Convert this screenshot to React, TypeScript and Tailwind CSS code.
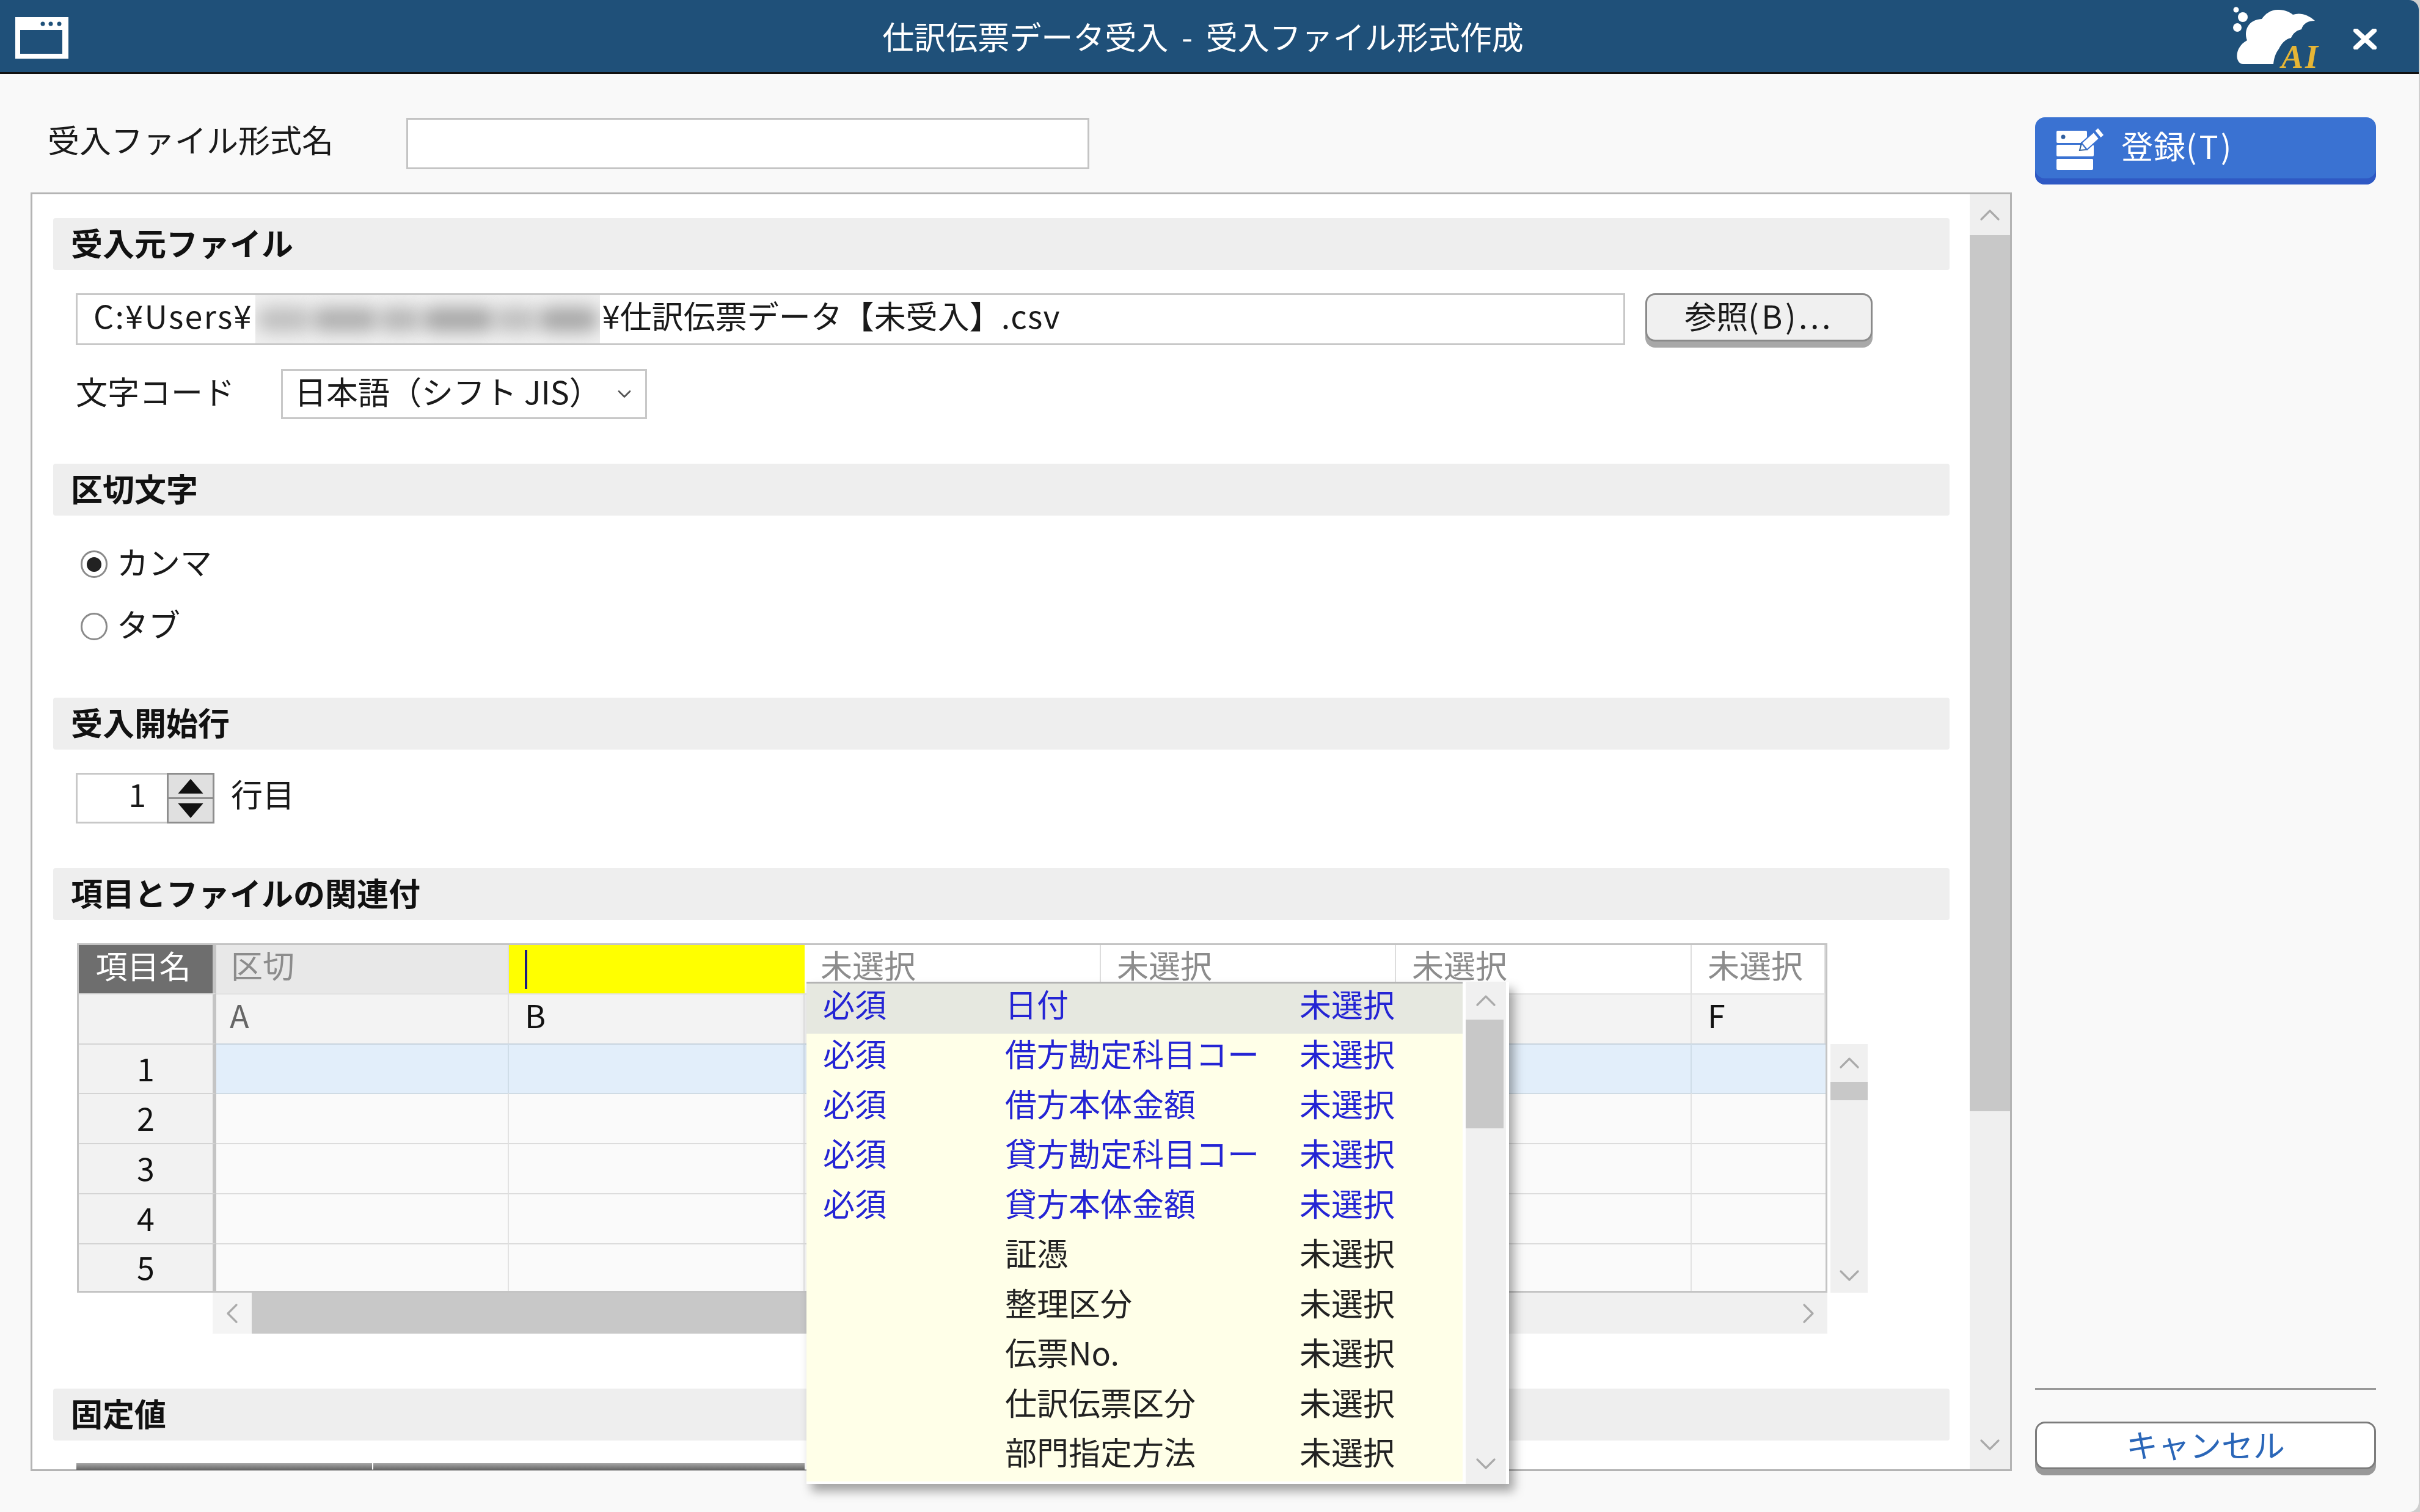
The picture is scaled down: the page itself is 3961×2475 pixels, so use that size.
import { ChevronDown, ChevronLeft, ChevronRight, ChevronUp } from 'lucide-react';

const rowNumbers = [1, 2, 3, 4, 5];
const columnKeys = ['A', 'B', 'C', 'D', 'E', 'F'];

const dropdownItems = [
  { required: true, name: '日付' },
  { required: true, name: '借方勘定科目コー' },
  { required: true, name: '借方本体金額' },
  { required: true, name: '貸方勘定科目コー' },
  { required: true, name: '貸方本体金額' },
  { required: false, name: '証憑' },
  { required: false, name: '整理区分' },
  { required: false, name: '伝票No.' },
  { required: false, name: '仕訳伝票区分' },
  { required: false, name: '部門指定方法' },
];

const blurBlobs = ['w-[90px] opacity-60', 'w-[110px] opacity-80', 'w-[70px] opacity-70', 'w-[120px] opacity-90', 'w-[70px] opacity-60', 'w-[100px] opacity-90'];

function SectionHeader({ title }: { title: string }) {
  return (
    <div className="flex h-[85px] w-[3104px] items-center rounded-[4px] bg-[#eeeeee] pb-[5px] pl-[29px] text-[52px] font-bold leading-none text-[#111]">
      {title}
    </div>
  );
}

function WindowIcon() {
  return (
    <svg width="87" height="68" viewBox="0 0 87 68">
      <rect x="0" y="0" width="87" height="68" fill="#fff" />
      <rect x="8" y="21" width="69" height="39" fill="#1f5079" />
      <circle cx="45" cy="11" r="3.5" fill="#1f5079" />
      <circle cx="58" cy="11" r="3.5" fill="#1f5079" />
      <circle cx="72" cy="11" r="3.5" fill="#1f5079" />
    </svg>
  );
}

function CloudLogo() {
  return (
    <div className="relative h-[118px] w-[160px]">
      <svg width="160" height="118" viewBox="0 0 160 118">
        <circle cx="20" cy="16" r="4.5" fill="#fff" />
        <circle cx="31" cy="28" r="8" fill="#fff" />
        <circle cx="22" cy="45" r="7" fill="#fff" />
        <path
          d="M32 105C18 105 16 78 38 66C32 50 40 32 62 31C68 22 78 15 90 16C100 16 108 20 113 24C125 20 138 24 149 34C138 34 130 38 127 48C118 50 113 55 110 62C100 64 94 72 90 80C84 88 82 96 81 105Z"
          fill="#fff"
        />
      </svg>
      <span className="absolute left-[94px] top-[66px] font-['Liberation_Serif',serif] text-[54px] font-bold italic leading-none tracking-[3px] text-[#e6b535]">
        AI
      </span>
    </div>
  );
}

function RegisterIcon() {
  return (
    <svg width="110" height="95" viewBox="0 0 110 95" className="-mt-[8px] shrink-0">
      <rect x="16" y="18" width="50" height="20" rx="2" fill="#fff" />
      <circle cx="27" cy="28" r="3.5" fill="#2f5f9f" />
      <rect x="16" y="41" width="61" height="19" rx="2" fill="#fff" />
      <rect x="16" y="64" width="60" height="18" rx="2" fill="#fff" />
      <polygon points="54,50 57,38 66,49" fill="#fff" stroke="#2a5a94" strokeWidth="2" />
      <polygon points="57,38 77,20 86,31 66,49" fill="#fff" stroke="#3a72d2" strokeWidth="2" />
      <polygon points="79.5,18 84,14 93,25 88.5,29" fill="#fff" />
    </svg>
  );
}

function Triangle({ up }: { up: boolean }) {
  return (
    <svg width="44" height="26" viewBox="0 0 40 24">
      <polygon points={up ? '20,1 39,23 1,23' : '1,1 39,1 20,23'} fill="#111" />
    </svg>
  );
}

function DataTable() {
  return (
    <div className="grid h-[572px] w-[2865px] grid-cols-[225px_479px_484px_485px_483px_484px_219px] grid-rows-[79px_82px_81px_82px_82px_82px_78px] border-[3px] border-[#c4c4c4] bg-[#fafafa] text-[52px] leading-none">
      <div className="flex items-center justify-center border-r-[6px] border-r-[#c4c4c4] bg-[#6e6e6e] pb-[14px] pr-[8px] text-white">項目名</div>
      <div className="flex items-center border-r-2 border-r-[#dddddd] bg-[#e8e8e8] pb-[16px] pl-[24px] text-[#8c8c8c]">区切</div>
      <div className="flex items-center bg-[#ffff00] pl-[26px]">
        <div className="h-[64px] w-[4px] bg-[#1c1c80]" />
      </div>
      {columnKeys.slice(2).map((key) => (
        <div key={key} className="flex items-center border-r-2 border-r-[#dddddd] bg-white pb-[16px] pl-[26px] text-[#8c8c8c] last:border-r-0 last:pl-[28px]">
          未選択
        </div>
      ))}

      <div className="border-r-[6px] border-r-[#c4c4c4] border-t-2 border-t-[#e2e2e2] bg-[#f2f2f2]" />
      {columnKeys.map((key) => (
        <div
          key={key}
          className={`flex items-center border-r-2 border-r-[#e2e2e2] border-t-2 border-t-[#e2e2e2] bg-[#f3f3f3] pb-[14px] last:border-r-0 ${key === 'A' ? 'pl-[22px] text-[#666]' : 'pl-[26px] text-[#111]'}`}
        >
          {key}
        </div>
      ))}

      {rowNumbers.map((n) => (
        <div key={n} className="contents">
          <div className="flex items-center justify-center border-r-[6px] border-r-[#c4c4c4] border-t-2 border-t-[#d4d4d4] bg-[#f2f2f2] pb-[4px] text-[#111]">{n}</div>
          {columnKeys.map((key) => (
            <div
              key={key}
              className={`border-r-2 border-t-2 last:border-r-0 ${n === 1 ? 'border-r-[#cfdde8] border-t-[#c8d4de] bg-[#e2eefa]' : n === 2 ? 'border-r-[#e2e2e2] border-t-[#cfdbe4] bg-[#fafafa]' : 'border-r-[#e2e2e2] border-t-[#dcdcdc] bg-[#fafafa]'}`}
            />
          ))}
        </div>
      ))}
    </div>
  );
}

function ColumnDropdown() {
  return (
    <div className="absolute left-[1194px] top-[63px] flex h-[822px] w-[1150px] items-start bg-white shadow-[8px_12px_16px_rgba(0,0,0,0.35)]">
      <div className="h-[818px] w-[1074px] border-t-[3px] border-t-[#b4b4b4] bg-[#ffffe8] text-[52px] leading-none">
        {dropdownItems.map((item, i) => (
          <div
            key={item.name}
            className={`grid h-[81.5px] grid-cols-[298px_482px_1fr] items-center pb-[16px] pl-[27px] ${i === 0 ? 'bg-[#e6e8e0]' : ''} ${item.required ? 'text-[#2424d4]' : 'text-[#222]'}`}
          >
            <span>{item.required ? '必須' : ''}</span>
            <span className="whitespace-nowrap">{item.name}</span>
            <span>未選択</span>
          </div>
        ))}
      </div>
      <div className="ml-[5px] flex h-[822px] w-[66px] flex-col items-center bg-[#f0f0f0]">
        <div className="flex h-[62px] w-full items-center justify-center">
          <ChevronUp size={56} strokeWidth={1.4} className="text-[#aaaaaa]" />
        </div>
        <div className="mr-[4px] h-[178px] w-[62px] bg-[#c8c8c8]" />
        <div className="flex-1" />
        <div className="flex h-[66px] w-full items-center justify-center">
          <ChevronDown size={56} strokeWidth={1.4} className="text-[#aaaaaa]" />
        </div>
      </div>
    </div>
  );
}

export default function App() {
  return (
    <div className="h-[2475px] w-[3961px] overflow-hidden bg-[#cfcfcf] font-['Noto_Sans_CJK_JP','Noto_Sans',sans-serif] text-[52px] leading-none text-[#1a1a1a]">
      <div className="flex h-full w-[3959px] flex-col overflow-hidden rounded-r-[16px] bg-[#f9f9f9]">
        <header className="flex h-[121px] shrink-0 items-start border-b-[3px] border-b-[#111] bg-[#1f5079] text-white">
          <div className="ml-[25px] mt-[28px]">
            <WindowIcon />
          </div>
          <div className="flex h-[118px] flex-1 items-center justify-center pl-[186px] [word-spacing:10px]">
            仕訳伝票データ受入 - 受入ファイル形式作成
          </div>
          <CloudLogo />
          <svg width="38" height="34" viewBox="0 0 38 34" className="ml-[52px] mr-[69px] mt-[47px]">
            <path d="M4 3L34 31M34 3L4 31" stroke="#fff" strokeWidth="8" strokeLinecap="round" />
          </svg>
        </header>

        <div className="flex flex-1">
          <div className="w-[3293px] pl-[50px]">
            <div className="flex h-[194px] items-start pl-[28px] pt-[72px]">
              <label className="flex h-[84px] w-[587px] items-center pb-[14px]">受入ファイル形式名</label>
              <div className="h-[84px] w-[1118px] border-[3px] border-[#c4c4c4] bg-white" />
            </div>

            <div className="flex h-[2093px] w-[3243px] border-[3px] border-[#b4b4b4] bg-white">
              <div className="w-[3174px] pl-[34px] pt-[39px]">
                <SectionHeader title="受入元ファイル" />

                <div className="ml-[37px] mt-[38px] flex items-start">
                  <div className="flex h-[85px] w-[2536px] items-center border-[3px] border-[#c8c8c8] pb-[14px] pl-[26px]">
                    <span className="tracking-[2.3px]">C:¥Users¥</span>
                    <div className="-mb-[14px] mx-[4px] flex h-[79px] w-[564px] items-center justify-center overflow-hidden bg-[#efefef]">
                      {blurBlobs.map((blob, i) => (
                        <div key={i} className={`h-[40px] rounded-full bg-[#a0a0a0] blur-[14px] ${blob}`} />
                      ))}
                    </div>
                    <span>¥仕訳伝票データ【未受入】<span className="tracking-[1.2px]">.csv</span></span>
                  </div>
                  <button className="ml-[33px] flex h-[79px] w-[372px] items-center justify-center rounded-[16px] border-[3px] border-[#8a8a8a] bg-[#f0f0f0] pb-[8px] shadow-[0_10px_0_#a8a8a8]">
                    参照<span className="tracking-[4.5px]">(B)...</span>
                  </button>
                </div>

                <div className="ml-[37px] mt-[39px] flex h-[82px] items-center">
                  <span className="w-[336px] pb-[10px]">文字コード</span>
                  <div className="flex h-[82px] w-[599px] items-center justify-between border-[3px] border-[#c8c8c8] pb-[10px] pl-[19px] pr-[16px]">
                    <span>日本語（シフト JIS）</span>
                    <ChevronDown size={36} strokeWidth={1.8} className="mt-[10px] text-[#555]" />
                  </div>
                </div>

                <div className="mt-[73px]">
                  <SectionHeader title="区切文字" />
                </div>

                <div className="ml-[45px] mt-[57px] flex h-[45px] items-center gap-[15px]">
                  <span className="flex h-[45px] w-[44px] items-center justify-center rounded-full border-[3px] border-[#8a8a8a] bg-white">
                    <span className="h-[24px] w-[24px] rounded-full bg-[#222]" />
                  </span>
                  <span className="-mt-[10px]">カンマ</span>
                </div>
                <div className="ml-[45px] mt-[57px] flex h-[45px] items-center gap-[15px]">
                  <span className="h-[45px] w-[44px] rounded-full border-[3px] border-[#8a8a8a] bg-white" />
                  <span className="-mt-[10px]">タブ</span>
                </div>

                <div className="mt-[94px]">
                  <SectionHeader title="受入開始行" />
                </div>

                <div className="ml-[37px] mt-[38px] flex h-[83px] items-center">
                  <div className="flex h-[83px] w-[149px] items-center justify-end border-[3px] border-r-0 border-[#c8c8c8] pb-[16px] pr-[34px]">1</div>
                  <div className="flex h-[83px] w-[78px] flex-col border-[3px] border-[#8e8e8e] bg-[#e0e0e0]">
                    <div className="flex flex-1 items-center justify-center border-b-[3px] border-b-[#8e8e8e]">
                      <Triangle up />
                    </div>
                    <div className="flex flex-1 items-center justify-center">
                      <Triangle up={false} />
                    </div>
                  </div>
                  <span className="-mt-[16px] ml-[27px]">行目</span>
                </div>

                <div className="mt-[73px]">
                  <SectionHeader title="項目とファイルの関連付" />
                </div>

                <div className="relative ml-[37px] mt-[38px]">
                  <div className="flex items-start">
                    <div className="w-[2867px] pl-[2px]">
                      <DataTable />
                    </div>
                    <div className="ml-[5px] mt-[165px] flex h-[407px] w-[61px] flex-col items-center bg-[#f0f0f0]">
                      <div className="flex h-[62px] w-full items-center justify-center">
                        <ChevronUp size={56} strokeWidth={1.4} className="text-[#aaaaaa]" />
                      </div>
                      <div className="h-[30px] w-full bg-[#c8c8c8]" />
                      <div className="flex-1" />
                      <div className="flex h-[56px] w-full items-center justify-center">
                        <ChevronDown size={56} strokeWidth={1.4} className="text-[#aaaaaa]" />
                      </div>
                    </div>
                  </div>
                  <div className="ml-[224px] flex h-[67px] w-[2643px] items-center bg-[#f0f0f0]">
                    <div className="flex h-[67px] w-[64px] items-center justify-center bg-[#f4f4f4]">
                      <ChevronLeft size={56} strokeWidth={1.4} className="text-[#aaaaaa]" />
                    </div>
                    <div className="h-[67px] w-[1100px] bg-[#c8c8c8]" />
                    <div className="flex-1" />
                    <div className="flex h-[67px] w-[62px] items-center justify-center">
                      <ChevronRight size={56} strokeWidth={1.4} className="text-[#aaaaaa]" />
                    </div>
                  </div>
                  <div className="absolute left-[2px] top-0">
                    <ColumnDropdown />
                  </div>
                </div>

                <div className="mt-[90px]">
                  <SectionHeader title="固定値" />
                </div>

                <div className="ml-[38px] mt-[37px] flex h-[11px] w-[1192px] gap-[2px]">
                  <div className="h-full w-[484px] bg-gradient-to-b from-[#a8a8a8] to-[#666666]" />
                  <div className="h-full flex-1 bg-gradient-to-b from-[#a8a8a8] to-[#666666]" />
                </div>
              </div>

              <div className="flex w-[66px] flex-col items-center bg-[#efefef]">
                <div className="flex h-[67px] w-full items-center justify-center">
                  <ChevronUp size={56} strokeWidth={1.4} className="text-[#aaaaaa]" />
                </div>
                <div className="h-[1434px] w-full bg-[#c8c8c8]" />
                <div className="flex-1" />
                <div className="flex h-[80px] w-full items-center justify-center">
                  <ChevronDown size={56} strokeWidth={1.4} className="text-[#aaaaaa]" />
                </div>
              </div>
            </div>
          </div>

          <aside className="ml-[38px] flex w-[558px] flex-col pt-[71px]">
            <button className="flex h-[110px] items-center gap-[12px] rounded-[16px] bg-[#3a72d2] pl-[19px] text-white shadow-[inset_0_-10px_0_#2f59c4]">
              <RegisterIcon />
              <span className="-mt-[18px] tracking-[1px]">
                登録<span className="tracking-[4px]">(T)</span>
              </span>
            </button>
            <div className="flex-1" />
            <div className="h-[3px] w-full bg-[#999999]" />
            <button className="mt-[52px] flex h-[78px] w-full items-center justify-center rounded-[16px] border-[3px] border-[#7c7c7c] bg-white pb-[4px] text-[#2a66b8] shadow-[0_10px_0_#999999]">
              キャンセル
            </button>
            <div className="h-[70px] shrink-0" />
          </aside>
        </div>
      </div>
    </div>
  );
}
